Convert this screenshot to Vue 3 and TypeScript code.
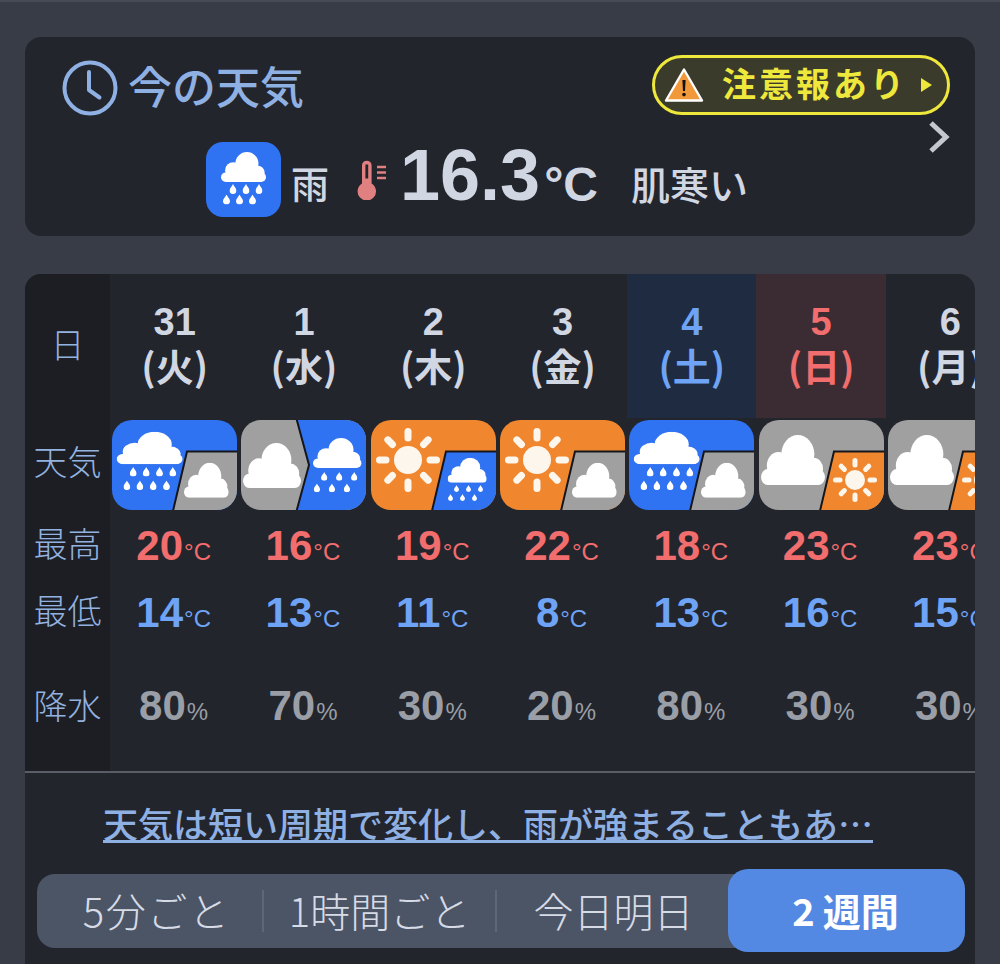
<script setup lang="ts">
interface Day {
  date: string
  week: string
  kind?: 'sat' | 'sun'
  icon: string
  high: number
  low: number
  rain: number
}

interface IconDef {
  bg: string
  sub: string
  arrow?: boolean
  main: string
  side: string
}

const BLUE = '#2f72f2'
const GRAY = '#a0a0a0'
const ORANGE = '#f0872f'

const icons: Record<string, IconDef> = {
  rainCloud: { bg: BLUE, sub: GRAY, main: '#rainL', side: '#cloudS' },
  cloudRain: { bg: GRAY, sub: BLUE, arrow: true, main: '#cloudA', side: '#rainA' },
  sunRain: { bg: ORANGE, sub: BLUE, main: '#sunL', side: '#rainS' },
  sunCloud: { bg: ORANGE, sub: GRAY, main: '#sunL', side: '#cloudS' },
  cloudSun: { bg: GRAY, sub: ORANGE, main: '#cloudL', side: '#sunS' },
}

const days: Day[] = [
  { date: '31', week: '(火)', icon: 'rainCloud', high: 20, low: 14, rain: 80 },
  { date: '1', week: '(水)', icon: 'cloudRain', high: 16, low: 13, rain: 70 },
  { date: '2', week: '(木)', icon: 'sunRain', high: 19, low: 11, rain: 30 },
  { date: '3', week: '(金)', icon: 'sunCloud', high: 22, low: 8, rain: 20 },
  { date: '4', week: '(土)', kind: 'sat', icon: 'rainCloud', high: 18, low: 13, rain: 80 },
  { date: '5', week: '(日)', kind: 'sun', icon: 'cloudSun', high: 23, low: 16, rain: 30 },
  { date: '6', week: '(月)', icon: 'cloudSun', high: 23, low: 15, rain: 30 },
]

const tabs = ['5分ごと', '1時間ごと', '今日明日']

const rays = [0, 45, 90, 135, 180, 225, 270, 315]

const dropRows = (xs: number[], y: number) => xs.map((x) => ({ x, y }))
const dropsL = [...dropRows([17.7, 30.7, 44, 57.3], 47), ...dropRows([11.4, 24.4, 37.7, 51], 60.5)]
const dropsA = [...dropRows([80, 95, 110], 52), ...dropRows([72.7, 87.7, 102.7], 63.5)]
const dropsS = [...dropRows([83, 95, 107], 65), ...dropRows([77, 89, 101], 74)]
const dropsNow = [
  ...dropRows([23.5, 36.5, 49.5], 42),
  ...dropRows([17, 30, 43], 52.5),
]
</script>

<template>
  <div class="page">
    <svg class="defs" width="0" height="0" aria-hidden="true">
      <defs>
        <symbol id="cloud" viewBox="0 0 66 44" preserveAspectRatio="none">
          <circle cx="38" cy="17" r="17" fill="#fff" />
          <circle cx="18" cy="27" r="12" fill="#fff" />
          <circle cx="54" cy="30" r="10" fill="#fff" />
          <rect x="0" y="30" width="66" height="14" rx="7" fill="#fff" />
          <rect x="18" y="20" width="34" height="14" fill="#fff" />
        </symbol>
        <symbol id="drop" viewBox="0 0 10 14">
          <path d="M5 0C6 3 10 6 10 9.2A5 4.8 0 0 1 0 9.2C0 6 4 3 5 0Z" fill="#fff" />
        </symbol>

        <g id="rainL">
          <use href="#cloud" x="4.7" y="11.7" width="66" height="32.5" />
          <use v-for="(d, i) in dropsL" :key="i" href="#drop" :x="d.x" :y="d.y" width="7" height="9.6" />
        </g>
        <g id="rainA">
          <use href="#cloud" x="72" y="18" width="48.6" height="30" />
          <use v-for="(d, i) in dropsA" :key="i" href="#drop" :x="d.x" :y="d.y" width="6.4" height="8.8" />
        </g>
        <g id="rainS">
          <use href="#cloud" x="76.7" y="37.7" width="39" height="25" />
          <use v-for="(d, i) in dropsS" :key="i" href="#drop" :x="d.x" :y="d.y" width="5" height="7" />
        </g>
        <g id="cloudL">
          <use href="#cloud" x="2" y="15" width="64" height="50" />
        </g>
        <g id="cloudA">
          <use href="#cloud" x="2" y="23" width="58" height="45" />
        </g>
        <g id="cloudS">
          <use href="#cloud" x="72" y="42.7" width="44.7" height="35" />
        </g>
        <g id="sunL">
          <circle cx="37" cy="40" r="14" fill="#fdf6ec" />
          <line
            v-for="r in rays"
            :key="r"
            x1="37"
            y1="18"
            x2="37"
            y2="11.5"
            stroke="#fdf6ec"
            stroke-width="7"
            stroke-linecap="round"
            :transform="`rotate(${r} 37 40)`"
          />
        </g>
        <g id="sunS">
          <circle cx="96" cy="60" r="10" fill="#fdf6ec" />
          <line
            v-for="r in rays"
            :key="r"
            x1="96"
            y1="45"
            x2="96"
            y2="40.5"
            stroke="#fdf6ec"
            stroke-width="5"
            stroke-linecap="round"
            :transform="`rotate(${r} 96 60)`"
          />
        </g>
      </defs>
    </svg>

    <section class="card now">
      <div class="now-head">
        <h2 class="now-title">
          <svg class="clock" width="56" height="56" viewBox="0 0 56 56">
            <circle cx="28" cy="28" r="25.5" fill="none" stroke="#8fb0e3" stroke-width="4" />
            <path d="M27 12V30L37.5 37.5" fill="none" stroke="#8fb0e3" stroke-width="4" stroke-linecap="round" stroke-linejoin="round" />
          </svg>
          今の天気
        </h2>
        <div class="alert">
          <svg width="40" height="36" viewBox="0 0 40 36">
            <path d="M20 2.5L38 33.5H2Z" fill="#f0983a" stroke="#fff" stroke-width="2.4" stroke-linejoin="round" />
            <path d="M18.4 13H21.6L21 24H19Z" fill="#111" />
            <circle cx="20" cy="27.6" r="1.8" fill="#111" />
          </svg>
          <span class="alert-text">注意報あり</span>
          <span class="alert-arrow"></span>
        </div>
      </div>
      <svg class="chevron" width="22" height="34" viewBox="0 0 22 34">
        <path d="M3 3L18 17L3 31" fill="none" stroke="#c4c7cf" stroke-width="5" />
      </svg>
      <div class="now-body">
        <svg class="now-icon" width="75" height="75" viewBox="0 0 75 75">
          <rect width="75" height="75" rx="17" fill="#2f72f2" />
          <use href="#cloud" x="15" y="10" width="45" height="30" />
          <use v-for="(d, i) in dropsNow" :key="i" href="#drop" :x="d.x" :y="d.y" width="7" height="10" />
        </svg>
        <span class="now-weather">雨</span>
        <svg class="thermo" width="30" height="40" viewBox="0 0 30 40">
          <path d="M5 5.5a4.8 4.8 0 0 1 9.6 0V23.5a9.2 9.2 0 1 1-9.6 0Z" fill="#e08080" />
          <rect x="8.4" y="4.5" width="2.8" height="14" fill="#22252c" />
          <path d="M20 7h9M20 12.5h9M20 18h9" stroke="#e08080" stroke-width="2.4" />
        </svg>
        <span class="now-temp">16.3</span>
        <span class="now-unit">°C</span>
        <span class="now-feel">肌寒い</span>
      </div>
    </section>

    <section class="card forecast">
      <div class="table">
        <div class="labels">
          <div class="row-head">日</div>
          <div class="row-icon">天気</div>
          <div class="row-high">最高</div>
          <div class="row-low">最低</div>
          <div class="row-rain">降水</div>
        </div>
        <div v-for="day in days" :key="day.date" class="day">
          <div class="row-head day-head" :class="day.kind">
            <span class="day-date">{{ day.date }}</span>
            <span class="day-week">{{ day.week }}</span>
          </div>
          <div class="row-icon">
            <svg class="icon" width="125" height="90" viewBox="0 0 125 90">
              <rect width="125" height="90" :fill="icons[day.icon].bg" />
              <polygon
                v-if="icons[day.icon].arrow"
                points="55,-3 68,45 55,93 128,93 128,-3"
                :fill="icons[day.icon].sub"
                stroke="#14161c"
                stroke-width="2"
              />
              <polygon
                v-else
                points="75,31.5 128,31.5 128,93 60.5,93"
                :fill="icons[day.icon].sub"
                stroke="#14161c"
                stroke-width="2"
              />
              <use :href="icons[day.icon].main" />
              <use :href="icons[day.icon].side" />
            </svg>
          </div>
          <div class="row-high value high">{{ day.high }}<small>°C</small></div>
          <div class="row-low value low">{{ day.low }}<small>°C</small></div>
          <div class="row-rain value rain">{{ day.rain }}<small>%</small></div>
        </div>
      </div>

      <div class="footer">
        <a class="link">天気は短い周期で変化し、雨が強まることもあ…</a>
        <div class="tabs">
          <div v-for="t in tabs" :key="t" class="tab">{{ t }}</div>
          <div class="tab active"><span class="two">2</span>週間</div>
        </div>
      </div>
    </section>
  </div>
</template>

<style>
html,
body {
  margin: 0;
  background: #383c47;
}
</style>

<style scoped>
.page {
  height: 964px;
  box-sizing: border-box;
  overflow: hidden;
  padding: 35px 25px 0;
  border-top: 2px solid #474b55;
  background: #383c47;
  font-family: 'Noto Sans CJK JP', sans-serif;
  display: flex;
  flex-direction: column;
  gap: 38px;
}

.defs {
  position: absolute;
}

.card {
  background: #22252c;
  border-radius: 16px;
  flex: none;
}

.now {
  height: 199px;
  position: relative;
  box-sizing: border-box;
  padding: 18px 25px 0 37px;
}

.now-head {
  display: flex;
  justify-content: space-between;
  align-items: flex-start;
  height: 62px;
}

.now-title {
  margin: 0;
  display: flex;
  align-items: center;
  gap: 10px;
  font-size: 44px;
  line-height: 56px;
  height: 60px;
  font-weight: 500;
  color: #8fb0e3;
  white-space: nowrap;
}

.clock {
  margin-top: 6px;
}

.alert {
  width: 298px;
  height: 60px;
  box-sizing: border-box;
  border: 3px solid #efe83c;
  border-radius: 30px;
  background: #3b3b2c;
  display: flex;
  align-items: center;
  padding-left: 9px;
  color: #efe83c;
}

.alert-text {
  margin: -4px 0 0 18px;
  font-size: 34px;
  line-height: 1;
  font-weight: 700;
  letter-spacing: 3px;
  white-space: nowrap;
}

.alert-arrow {
  margin-left: 14px;
  border-left: 11px solid #efe83c;
  border-top: 7px solid transparent;
  border-bottom: 7px solid transparent;
}

.chevron {
  position: absolute;
  right: 25px;
  top: 83px;
}

.now-body {
  display: flex;
  align-items: center;
  margin-top: 25px;
  padding-left: 144px;
  color: #d0d6e2;
  height: 75px;
  white-space: nowrap;
}

.now-weather {
  margin: 3px 0 0 10px;
  font-size: 38px;
  font-weight: 500;
}

.thermo {
  margin: 0 0 0 28px;
}

.now-temp {
  margin: -10px 0 0 13px;
  font-family: 'Liberation Sans', sans-serif;
  font-size: 72px;
  font-weight: 700;
}

.now-unit {
  margin: 10px 0 0 4px;
  font-family: 'Liberation Sans', sans-serif;
  font-size: 48px;
  font-weight: 700;
}

.now-feel {
  margin: 6px 0 0 33px;
  font-size: 39px;
  font-weight: 500;
}

.forecast {
  height: 720px;
  overflow: hidden;
}

.table {
  display: flex;
  height: 497px;
  border-bottom: 2px solid #5a5d66;
  box-sizing: content-box;
}

.labels {
  flex: none;
  width: 85px;
  background: #1c1e23;
  color: #93b2e0;
  font-size: 34px;
  font-weight: 300;
  text-align: center;
}

.labels > div {
  display: flex;
  align-items: center;
  justify-content: center;
  box-sizing: border-box;
}

.day {
  flex: none;
  width: 129.3px;
}

.row-head {
  height: 144px;
}

.row-icon {
  height: 96px;
  padding-top: 2px;
  box-sizing: border-box;
  text-align: center;
}

.row-high {
  height: 60px;
}

.row-low {
  height: 74px;
}

.row-rain {
  height: 123px;
}

.labels .row-head {
  padding-bottom: 6px;
}

.labels .row-icon {
  padding: 0 0 12px;
}

.labels .row-high {
  padding-bottom: 4px;
}

.labels .row-low {
  padding-bottom: 3px;
}

.labels .row-rain {
  padding-bottom: 11px;
}

.day-head {
  display: flex;
  flex-direction: column;
  align-items: center;
  justify-content: center;
  padding-bottom: 6px;
  box-sizing: border-box;
  color: #d0d6e2;
  white-space: nowrap;
}

.day-date {
  font-family: 'Liberation Sans', sans-serif;
  font-size: 38px;
  line-height: 44px;
  font-weight: 700;
}

.day-week {
  font-size: 38px;
  line-height: 42px;
  font-weight: 700;
}

.day-head.sat {
  background: #1f2b40;
  color: #6ea3f5;
}

.day-head.sun {
  background: #3a2c32;
  color: #f26d6d;
}

.icon {
  display: block;
  margin: 0 auto;
  border-radius: 20px;
}

.value {
  box-sizing: border-box;
  text-align: center;
  font-family: 'Liberation Sans', sans-serif;
  font-size: 42px;
  font-weight: 700;
  white-space: nowrap;
}

.value small {
  font-size: 24px;
  font-weight: 400;
  margin: 0 2px 0 1px;
}

.high {
  color: #f26d6d;
  padding-top: 2px;
  line-height: 60px;
}

.low {
  color: #6ea3f5;
  padding-top: 2px;
  line-height: 74px;
}

.rain {
  color: #9a9ea6;
  line-height: 116px;
}

.footer {
  padding: 24px 10px 0 12px;
}

.link {
  display: block;
  margin-left: 66px;
  font-size: 35px;
  line-height: 52px;
  font-weight: 500;
  color: #8fb0e3;
  text-decoration: underline;
  white-space: nowrap;
}

.tabs {
  display: flex;
  margin-top: 25px;
  height: 74px;
  border-radius: 18px;
  background: #4c5566;
}

.tab {
  flex: none;
  display: flex;
  align-items: center;
  justify-content: center;
  padding-bottom: 2px;
  box-sizing: border-box;
  font-size: 40px;
  font-weight: 300;
  color: #d6dbe6;
  white-space: nowrap;
}

.tab:nth-child(1) {
  width: 227px;
  padding-left: 14px;
  letter-spacing: 1.5px;
  border-right: 2px solid #5e6777;
  margin: 16px 0;
}

.tab:nth-child(2) {
  width: 233px;
  border-right: 2px solid #5e6777;
  margin: 16px 0;
}

.tab:nth-child(3) {
  width: 231px;
  padding-left: 2px;
}

.tab.active {
  width: 237px;
  margin: -5px 0 -4px;
  border-radius: 20px;
  background: #5489e3;
  color: #fff;
  font-weight: 700;
  font-size: 38px;
  padding-right: 2px;
}

.two {
  margin-right: 8px;
}
</style>
